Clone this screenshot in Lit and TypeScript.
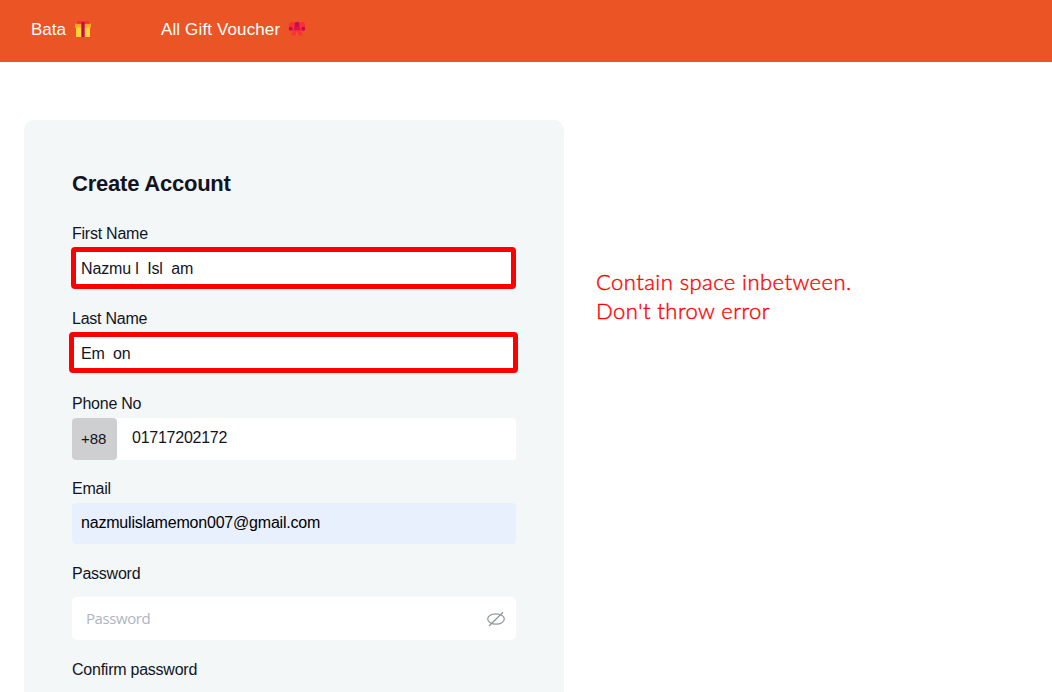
import { LitElement, html, css, svg } from "lit";
import { customElement } from "lit/decorators.js";

const gift = svg`<svg class="emoji" width="18" height="18" viewBox="0 0 18 18">
  <path d="M2 6h14v11H2z" fill="#ffd335"/><path d="M1 3.700h16v4H1z" fill="#ffab22"/>
  <path d="M2.500 3.700C2.500 0 6.500 0 9 2.800c2.500-2.800 6.500-2.800 6.500.9z" fill="#f92f35"/>
  <path d="M7.300 1.800h3.400V17H7.300z" fill="#c80a50"/></svg>`;

const bow = svg`<svg class="emoji" width="18" height="18" viewBox="0 0 18 18">
  <path d="M6 8.500 3 15.700l2.500-.7 1.300 1.500L9 10zM12 8.500l3 7.200-2.500-.7-1.300 1.500L9 10z" fill="#fb3038"/>
  <path d="M7.500 3 3.500 1.800C1.500 1.500.8 4 .8 6.500S2 11 4 10.800L8 9zM10.500 3l4-1.200c2-.3 2.700 2.200 2.700 4.700S16 11 14 10.800L10 9z" fill="#fb3038"/>
  <path d="M6.700 3Q6.700 2 9 2t2.300 1v4.500H6.700z" fill="#c80a50"/>
  <path d="M6 7.500h6v2.700H6z" fill="#d9134c"/>
  <circle cx="2.700" cy="8.700" r="2" fill="#c80a50"/><circle cx="15.300" cy="8.700" r="2" fill="#c80a50"/></svg>`;

@customElement("app-root")
export class AppRoot extends LitElement {
  static styles = css`
    :host { display: block; height: 692px; overflow: hidden; background: #fff; color: #12141f;
      font: 16px/24px "Liberation Sans", Arial, sans-serif; }
    .bar { box-sizing: border-box; height: 62px; background: #eb5525; color: #fff; display: flex;
      gap: 68px; padding: 18px 31px 0; font-size: 17px; }
    .link { display: flex; gap: 8px; }
    .emoji { margin-top: 2px; }
    .voucher { margin-left: 1px; letter-spacing: 0.13px; }
    .page { display: flex; align-items: flex-start; gap: 32px; padding: 58px 24px 0; }
    .card { box-sizing: border-box; width: 540px; height: 640px; padding: 48px 48px 0; background: #f3f7f8;
      border-radius: 10px; }
    h1 { margin: 0 0 21px; font-size: 22px; line-height: 32px; letter-spacing: -0.22px; }
    .field { display: grid; grid-template-rows: 25px 42px; row-gap: 2px; margin-bottom: 16px; }
    .label { white-space: pre; line-height: 26px; letter-spacing: -0.24px; }
    .input { box-sizing: border-box; height: 42px; background: #fff; border-radius: 4px; padding: 0 9px;
      display: flex; align-items: center; white-space: pre; letter-spacing: -0.2px; }
    .marked { border: 5px solid #f00; padding-top: 2px; }
    .first { margin: -1px 0 0 -1px; padding-left: 5px; width: 445px; letter-spacing: -0.16px; }
    .last { margin: -1px -2px 0 -3px; padding-left: 7px; height: 41px; }
    .phone { padding: 0; gap: 15px; }
    .code { box-sizing: border-box; width: 45px; height: 42px; background: #cdcfd0; border-radius: 4px;
      line-height: 42px; padding-left: 9px; font-size: 15px; letter-spacing: 0; }
    .number { padding-bottom: 3px; letter-spacing: -0.25px; }
    .email { height: 41px; background: #e8f0fe; color: #000; padding-bottom: 2px; }
    .password { height: 43px; margin-top: 9px; border-radius: 5px; padding: 0 11px 0 14px;
      justify-content: space-between; color: #adb5bf; font: 15px/24px "Open Sans", sans-serif;
      letter-spacing: -0.42px; }
    .hint { padding-bottom: 2px; }
    .secret { margin-bottom: 27px; }
    .note { margin: 147px 0 0; color: #f00; font: 300 22px/29px Lato, sans-serif; white-space: nowrap;
      letter-spacing: 0.45px; -webkit-text-stroke: 0.4px #f00; }
  `;

  render() {
    return html`
      <nav class="bar">
        <span class="link"><span>Bata</span>${gift}</span>
        <span class="link"><span class="voucher">All Gift Voucher</span>${bow}</span>
      </nav>
      <main class="page">
        <section class="card">
          <h1>Create Account</h1>
          <div class="field"><div class="label">First Name</div><div class="input marked first">Nazmu l  Isl  am</div></div>
          <div class="field"><div class="label">Last Name</div><div class="input marked last">Em  on</div></div>
          <div class="field"><div class="label">Phone No</div>
            <div class="input phone"><span class="code">+88</span><span class="number">01717202172</span></div></div>
          <div class="field"><div class="label">Email</div><div class="input email">nazmulislamemon007@gmail.com</div></div>
          <div class="field secret"><div class="label">Password</div>
            <div class="input password"><span class="hint">Password</span>
              <svg width="18" height="16" viewBox="0 0 18 16" fill="none" stroke="#8c959f" stroke-width="1.200">
                <ellipse cx="9" cy="8" rx="8.300" ry="5.200"/><path d="M2 15 16 1.200"/></svg>
            </div></div>
          <div class="label">Confirm password</div>
        </section>
        <p class="note">Contain space inbetween.<br />Don't throw error</p>
      </main>`;
  }
}
